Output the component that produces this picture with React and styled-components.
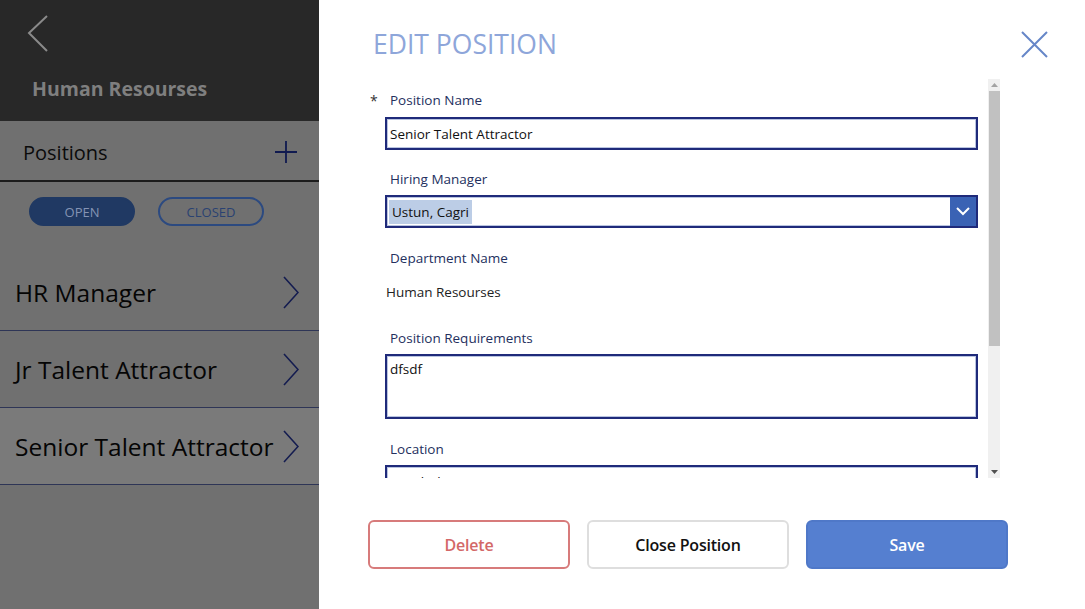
import styled, { createGlobalStyle } from "styled-components";

const GlobalStyle = createGlobalStyle`
  html, body {
    margin: 0;
    padding: 0;
    background: #ffffff;
  }
  * {
    box-sizing: border-box;
  }
  body {
    font-family: "Open Sans", "Noto Sans", sans-serif;
  }
`;

const Screen = styled.div`
  display: flex;
  width: 1085px;
  height: 609px;
  overflow: hidden;
`;

/* ---------- left side (dimmed behind the panel) ---------- */

const Sidebar = styled.aside`
  width: 319px;
  flex-shrink: 0;
  display: flex;
  flex-direction: column;
  background: #707070;
`;

const Header = styled.header`
  height: 121px;
  background: #282828;
  display: flex;
  flex-direction: column;
  padding: 14px 0 0 27px;
`;

const BackButton = styled.div`
  width: 24px;
  height: 40px;
  display: flex;
  align-items: center;
`;

const DeptTitle = styled.h1`
  margin: 21px 0 0 5px;
  font-size: 19.5px;
  font-weight: 700;
  color: #7f7f7f;
`;

const SectionBar = styled.div`
  height: 61px;
  display: flex;
  align-items: center;
  justify-content: space-between;
  padding: 3px 21px 0 23px;
  border-bottom: 2px solid #1c1c1c;
  font-size: 20px;
  color: #0b0b0b;
`;

const Filters = styled.div`
  display: flex;
  gap: 23px;
  padding: 15px 0 0 29px;
  height: 72px;
`;

const Pill = styled.div`
  width: 106px;
  height: 29px;
  border-radius: 15px;
  display: flex;
  align-items: center;
  justify-content: center;
  font-size: 13px;
  color: ${(p) => (p.$active ? "#8594b4" : "#2a4272")};
  background: ${(p) => (p.$active ? "#203963" : "transparent")};
  border: 2px solid ${(p) => (p.$active ? "#203963" : "#2c4a80")};
`;

const PositionList = styled.ul`
  list-style: none;
  margin: 0;
  padding: 0;
`;

const PositionRow = styled.li`
  height: 77px;
  display: flex;
  align-items: center;
  justify-content: space-between;
  padding: 0 20px 0 15px;
  font-size: 24.5px;
  font-weight: 500;
  color: #050505;
  background: ${(p) => (p.$selected ? "#7a7a7a" : "transparent")};
  border-bottom: 1px solid #2e3556;
`;

/* ---------- edit panel ---------- */

const Panel = styled.section`
  flex: 1;
  background: #ffffff;
  display: flex;
  flex-direction: column;
  padding: 0 0 0 49px;
`;

const PanelHead = styled.div`
  height: 79px;
  display: flex;
  align-items: flex-start;
  justify-content: space-between;
  padding: 26px 37px 0 5px;
`;

const PanelTitle = styled.h2`
  margin: 0;
  font-size: 26.5px;
  font-weight: 400;
  color: #8ea6da;
  line-height: 36px;
`;

const CloseX = styled.div`
  width: 27px;
  height: 27px;
  margin-top: 5px;
`;

const FormArea = styled.div`
  display: flex;
  height: 399px;
  width: 632px;
`;

const FormViewport = styled.div`
  flex: 1;
  overflow: hidden;
  padding-top: 11px;
`;

const ScrollTrack = styled.div`
  width: 12px;
  background: #f0f0f0;
  display: flex;
  flex-direction: column;
  align-items: center;
`;

const ScrollArrow = styled.div`
  height: 12px;
  display: flex;
  align-items: center;
  justify-content: center;
`;

const ScrollThumb = styled.div`
  width: 11px;
  height: 255px;
  background: #c1c1c1;
`;

const ScrollGap = styled.div`
  flex: 1;
`;

const FieldLabel = styled.div`
  display: flex;
  height: 20px;
  align-items: center;
  font-size: 13.5px;
  color: #24305e;
  margin-top: ${(p) => p.$gap || 0}px;
`;

const Required = styled.span`
  width: 22px;
  padding-left: 2px;
  color: #333;
  font-size: 14px;
`;

const LabelText = styled.span`
  padding-left: ${(p) => (p.$required ? 0 : 22)}px;
`;

const TextBox = styled.div`
  margin: ${(p) => p.$top || 6}px 0 0 17px;
  width: 593px;
  height: ${(p) => p.$h || 33}px;
  border: 2px solid #1f2a7a;
  box-shadow: inset 0 0 0 1px #b9c4e0;
  padding: ${(p) => (p.$multi ? "4px 3px" : "0 3px")};
  display: flex;
  align-items: ${(p) => (p.$multi ? "flex-start" : "center")};
  font-size: 13.5px;
  color: #111;
  background: #fff;
`;

const Dropdown = styled(TextBox)`
  padding: 0 0 0 2px;
  justify-content: space-between;
`;

const Selected = styled.span`
  background: #bccde6;
  padding: 2px 3px;
  line-height: 20px;
`;

const DropButton = styled.div`
  width: 26px;
  height: 29px;
  background: #3a62b4;
  display: flex;
  align-items: center;
  justify-content: center;
`;

const StaticValue = styled.div`
  margin: 14px 0 0 18px;
  height: 20px;
  line-height: 20px;
  font-size: 13.5px;
  color: #222;
`;

const Actions = styled.div`
  display: flex;
  gap: 17px;
  padding-top: 42px;
`;

const ActionButton = styled.button`
  width: 202px;
  height: 49px;
  border-radius: 6px;
  font-family: "Open Sans", sans-serif;
  font-size: 16px;
  font-weight: 600;
  cursor: pointer;
  border: 2px solid ${(p) => p.$border};
  background: ${(p) => p.$bg};
  color: ${(p) => p.$color};
  letter-spacing: -0.2px;
`;

const Chevron = ({ color }) => (
  <svg width="16" height="33" viewBox="0 0 16 33">
    <polyline points="1,1 15,16.5 1,32" fill="none" stroke={color} strokeWidth="1.6" />
  </svg>
);

const positions = [
  { name: "HR Manager" },
  { name: "Jr Talent Attractor" },
  { name: "Senior Talent Attractor", selected: true },
];

export default function App() {
  return (
    <>
      <GlobalStyle />
      <Screen>
        <Sidebar>
          <Header>
            <BackButton>
              <svg width="24" height="40" viewBox="0 0 24 40">
                <polyline points="20,2 2,19 20,37" fill="none" stroke="#8a8a8a" strokeWidth="2" />
              </svg>
            </BackButton>
            <DeptTitle>Human Resourses</DeptTitle>
          </Header>
          <SectionBar>
            <span>Positions</span>
            <svg width="24" height="24" viewBox="0 0 24 24">
              <path d="M12 1v22M1 12h22" stroke="#101a50" strokeWidth="1.8" />
            </svg>
          </SectionBar>
          <Filters>
            <Pill $active>OPEN</Pill>
            <Pill>CLOSED</Pill>
          </Filters>
          <PositionList>
            {positions.map((p) => (
              <PositionRow key={p.name} $selected={p.selected}>
                <span>{p.name}</span>
                <Chevron color="#141c50" />
              </PositionRow>
            ))}
          </PositionList>
        </Sidebar>

        <Panel>
          <PanelHead>
            <PanelTitle>EDIT POSITION</PanelTitle>
            <CloseX>
              <svg width="27" height="27" viewBox="0 0 27 27">
                <path d="M1 1l25 25M26 1L1 26" stroke="#6686c8" strokeWidth="2" />
              </svg>
            </CloseX>
          </PanelHead>

          <FormArea>
            <FormViewport>
              <FieldLabel>
                <Required>*</Required>
                <LabelText $required>Position Name</LabelText>
              </FieldLabel>
              <TextBox $top={7}>Senior Talent Attractor</TextBox>

              <FieldLabel $gap={19}>
                <LabelText>Hiring Manager</LabelText>
              </FieldLabel>
              <Dropdown>
                <Selected>Ustun, Cagri</Selected>
                <DropButton>
                  <svg width="14" height="9" viewBox="0 0 14 9">
                    <polyline points="1,1 7,7 13,1" fill="none" stroke="#ffffff" strokeWidth="2" />
                  </svg>
                </DropButton>
              </Dropdown>

              <FieldLabel $gap={20}>
                <LabelText>Department Name</LabelText>
              </FieldLabel>
              <StaticValue>Human Resourses</StaticValue>

              <FieldLabel $gap={26}>
                <LabelText>Position Requirements</LabelText>
              </FieldLabel>
              <TextBox $h={65} $multi>
                dfsdf
              </TextBox>

              <FieldLabel $gap={20}>
                <LabelText>Location</LabelText>
              </FieldLabel>
              <TextBox>Istanbul</TextBox>
            </FormViewport>
            <ScrollTrack>
              <ScrollArrow>
                <svg width="7" height="4" viewBox="0 0 7 4">
                  <polygon points="0,4 3.5,0 7,4" fill="#a3a3a3" />
                </svg>
              </ScrollArrow>
              <ScrollThumb />
              <ScrollGap />
              <ScrollArrow>
                <svg width="7" height="4" viewBox="0 0 7 4">
                  <polygon points="0,0 3.5,4 7,0" fill="#505050" />
                </svg>
              </ScrollArrow>
            </ScrollTrack>
          </FormArea>

          <Actions>
            <ActionButton $border="#d77b7b" $bg="#ffffff" $color="#d36868">
              Delete
            </ActionButton>
            <ActionButton $border="#dedede" $bg="#ffffff" $color="#111111">
              Close Position
            </ActionButton>
            <ActionButton $border="#4f78c8" $bg="#557fd0" $color="#ffffff">
              Save
            </ActionButton>
          </Actions>
        </Panel>
      </Screen>
    </>
  );
}
